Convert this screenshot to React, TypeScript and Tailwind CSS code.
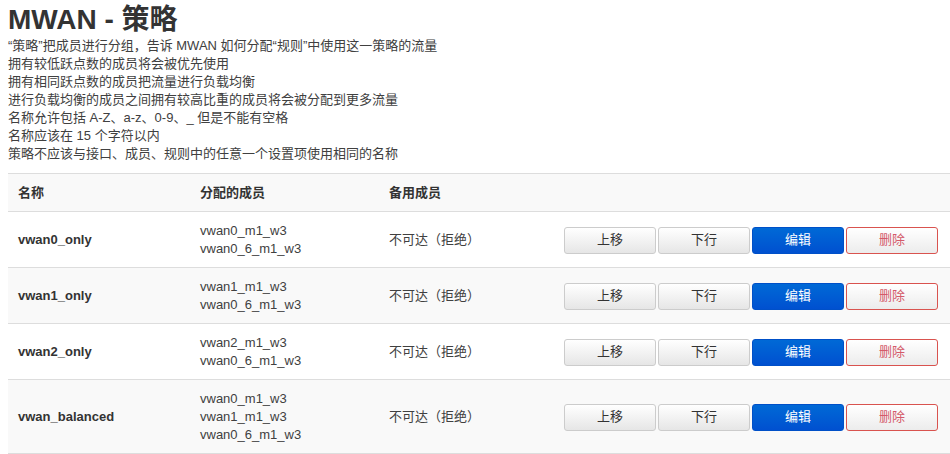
import React from 'react'

interface Policy {
  name: string
  members: string[]
}

const policies: Policy[] = [
  { name: 'vwan0_only', members: ['vwan0_m1_w3', 'vwan0_6_m1_w3'] },
  { name: 'vwan1_only', members: ['vwan1_m1_w3', 'vwan0_6_m1_w3'] },
  { name: 'vwan2_only', members: ['vwan2_m1_w3', 'vwan0_6_m1_w3'] },
  { name: 'vwan_balanced', members: ['vwan0_m1_w3', 'vwan1_m1_w3', 'vwan0_6_m1_w3'] },
]

const notes = [
  '“策略”把成员进行分组，告诉 MWAN 如何分配“规则”中使用这一策略的流量',
  '拥有较低跃点数的成员将会被优先使用',
  '拥有相同跃点数的成员把流量进行负载均衡',
  '进行负载均衡的成员之间拥有较高比重的成员将会被分配到更多流量',
  '名称允许包括 A-Z、a-z、0-9、_ 但是不能有空格',
  '名称应该在 15 个字符以内',
  '策略不应该与接口、成员、规则中的任意一个设置项使用相同的名称',
]

const grid = 'grid grid-cols-[182px_189px_175px_1fr] items-center border-b border-[#dddddd]'

export default function App() {
  return (
    <div
      className="bg-white pl-2 text-[13px] text-[#404040] min-h-screen"
      style={{ fontFamily: '"Liberation Sans", Arial, "Noto Sans CJK SC", sans-serif' }}
    >
      <h2 className="pt-[4px] text-[28px] font-bold leading-[32px] text-[#333333]">MWAN - 策略</h2>
      <div className="mt-[1px] leading-[18px]">
        {notes.map((n) => (
          <div key={n}>{n}</div>
        ))}
      </div>

      <div className="mt-[10px] border-t border-[#dddddd]">
        {/* header */}
        <div className={`${grid} h-[38px] bg-[#f9f9f9] font-bold text-[#333333]`}>
          <div className="px-[10px]">名称</div>
          <div className="px-[10px]">分配的成员</div>
          <div className="px-[10px]">备用成员</div>
          <div />
        </div>

        {policies.map((p, i) => (
          <div key={p.name} className={`${grid} pt-[10px] pb-[9px] ${i % 2 === 1 ? 'bg-[#f9f9f9]' : 'bg-white'}`}>
            <div className="px-[10px] font-bold text-[#333333]">{p.name}</div>
            <div className="px-[10px] leading-[18px]">
              {p.members.map((m, j) => (
                <div key={j}>{m}</div>
              ))}
            </div>
            <div className="px-[10px]">不可达（拒绝）</div>
            <div className="flex gap-[2px] px-[10px]">
              <button className="h-[27px] w-[92px] rounded-[3px] border border-[#cccccc] bg-gradient-to-b from-white to-[#e6e6e6] text-[#333333]">
                上移
              </button>
              <button className="h-[27px] w-[92px] rounded-[3px] border border-[#cccccc] bg-gradient-to-b from-white to-[#e6e6e6] text-[#333333]">
                下行
              </button>
              <button className="h-[27px] w-[92px] rounded-[3px] border border-[#0050c8] bg-gradient-to-b from-[#0069d6] to-[#0050d0] text-white">
                编辑
              </button>
              <button className="h-[27px] w-[92px] rounded-[3px] border border-[#d9534f] bg-gradient-to-b from-white to-[#ececec] text-[#d45a6a]">
                删除
              </button>
            </div>
          </div>
        ))}
      </div>
    </div>
  )
}
